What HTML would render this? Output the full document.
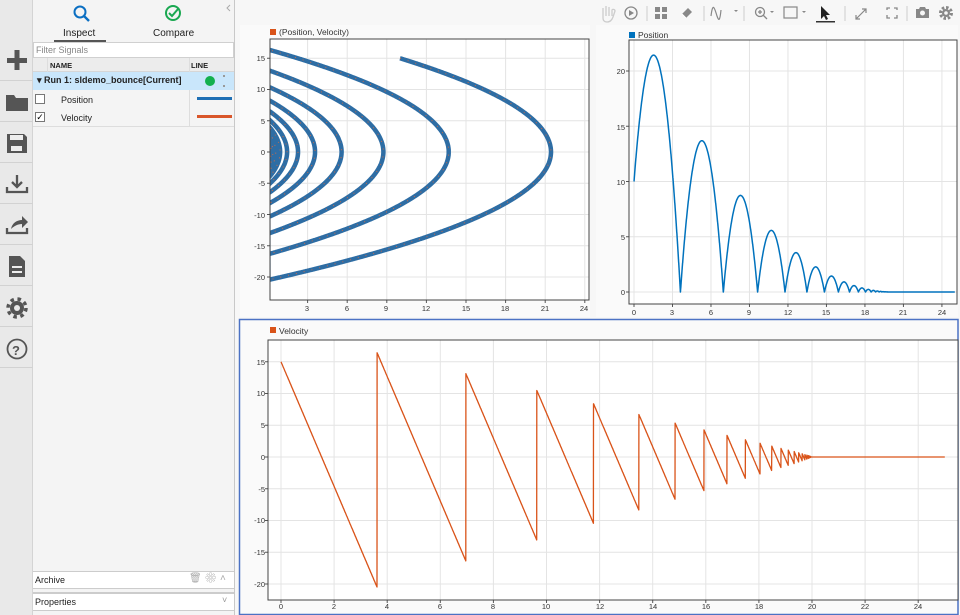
<!DOCTYPE html>
<html><head><meta charset="utf-8">
<style>
*{box-sizing:border-box;margin:0;padding:0}
body{width:960px;height:615px;overflow:hidden;background:#f7f7f7;font-family:"Liberation Sans",Arial,sans-serif;position:relative}
#bar{position:absolute;left:0;top:0;width:33px;height:615px;background:#e9e9e9;border-right:1px solid #d4d4d4}
.ic{position:absolute;left:0;width:33px;height:41px;border-bottom:1px solid #d2d2d2}
#panel{position:absolute;left:33px;top:0;width:202px;height:615px;background:#f4f4f4;border-right:1px solid #c8c8c8}
.a{position:absolute}
.t{position:absolute;font-size:9px;color:#222;white-space:nowrap}
.tick{font-size:7.5px;fill:#333;font-family:"Liberation Sans",Arial,sans-serif}
</style></head><body>
<div id="bar">
 <div class="ic" style="top:40px"></div>
 <div class="ic" style="top:81px"></div>
 <div class="ic" style="top:122px"></div>
 <div class="ic" style="top:163px"></div>
 <div class="ic" style="top:204px"></div>
 <div class="ic" style="top:245px"></div>
 <div class="ic" style="top:286px"></div>
 <div class="ic" style="top:327px"></div>
 <svg class="a" style="left:0;top:0" width="33" height="380" fill="#555" stroke="#555">
  <rect x="7" y="58" width="20" height="5" stroke="none"/><rect x="14.5" y="50" width="5" height="20" stroke="none"/>
  <path d="M6 95h8l2 3h12v13H6z" stroke="none"/>
  <path d="M7 134h17l3 3v16H7z" stroke="none"/><rect x="11" y="146" width="11" height="5" fill="#eee" stroke="none"/><rect x="10" y="135" width="13" height="5" fill="#eee" stroke="none"/>
  <path d="M17 175v12M12 182l5 5 5-5M7 187v5h20v-5" fill="none" stroke-width="2.3"/>
  <path d="M7 228v5h20v-5" fill="none" stroke-width="2.3"/><path d="M11 229c1-6 6-9 11-9v-4l6 6-6 6v-4c-4 0-8 2-11 5z" stroke="none"/>
  <path d="M9 256h11l5 5v16H9z" stroke="none"/><rect x="12" y="266" width="10" height="2" fill="#eee" stroke="none"/><rect x="12" y="271" width="10" height="2" fill="#eee" stroke="none"/>
  <circle cx="17" cy="308" r="7" stroke="none"/><circle cx="17" cy="308" r="9" fill="none" stroke-width="3.5" stroke-dasharray="3.5 3.6"/><circle cx="17" cy="308" r="3" fill="#e9e9e9" stroke="none"/>
  <circle cx="17" cy="349" r="9.5" fill="none" stroke-width="1.8"/>
 </svg>
 <div class="t" style="left:12px;top:343px;font-size:13px;font-weight:bold;color:#555">?</div>
</div>
<div id="panel">
 <svg class="a" style="left:0;top:0" width="202" height="42">
  <circle cx="47" cy="12" r="5.5" fill="none" stroke="#0b6fc2" stroke-width="2"/><path d="M51 16l5 5" stroke="#0b6fc2" stroke-width="2.4"/>
  <circle cx="140" cy="13" r="7" fill="none" stroke="#1aa851" stroke-width="2"/><path d="M136 13l3 3 6-7" fill="none" stroke="#1aa851" stroke-width="2"/>
  <path d="M197 5l-3 3 3 3" fill="none" stroke="#aaa"/>
  <rect x="21" y="40" width="52" height="2" fill="#555"/>
 </svg>
 <div class="t" style="left:30px;top:28px;font-size:10px">Inspect</div>
 <div class="t" style="left:120px;top:28px;font-size:10px">Compare</div>
 <div class="a" style="left:0;top:42px;width:201px;height:16px;background:#fff;border:1px solid #d0d0d0"></div>
 <div class="t" style="left:3px;top:45px;color:#888;font-size:9px">Filter Signals</div>
 <div class="a" style="left:0;top:58px;width:201px;height:14px;background:#ececec;border-bottom:1px solid #d6d6d6"></div>
 <div class="a" style="left:156px;top:58px;width:1px;height:68px;background:#ddd"></div>
 <div class="a" style="left:14px;top:58px;width:1px;height:14px;background:#ddd"></div>
 <div class="t" style="left:17px;top:61px;font-size:7.5px;font-weight:bold">NAME</div>
 <div class="t" style="left:158px;top:61px;font-size:7.5px;font-weight:bold">LINE</div>
 <div class="a" style="left:0;top:72px;width:201px;height:18px;background:#c9e6fb"></div>
 <div class="t" style="left:4px;top:75px;font-size:9px;font-weight:bold">▾ Run 1: sldemo_bounce[Current]</div>
 <div class="a" style="left:172px;top:76px;width:10px;height:10px;border-radius:50%;background:#13b04e"></div>
 <div class="a" style="left:190px;top:75px;width:2px;height:12px;border-top:2px dotted #999;border-bottom:2px dotted #999"></div>
 <div class="a" style="left:2px;top:94px;width:10px;height:10px;background:#fff;border:1px solid #777"></div>
 <div class="a" style="left:2px;top:112px;width:10px;height:10px;background:#fff;border:1px solid #777;font-size:9px;line-height:8px;text-align:center">✓</div>
 <div class="t" style="left:28px;top:95px">Position</div>
 <div class="t" style="left:28px;top:113px">Velocity</div>
 <div class="a" style="left:164px;top:97px;width:35px;height:3px;background:#1f6fb4"></div>
 <div class="a" style="left:164px;top:115px;width:35px;height:3px;background:#d9562a"></div>
 <div class="a" style="left:0;top:126px;width:201px;height:1px;background:#ddd"></div>
 <div class="a" style="left:0;top:571px;width:201px;height:18px;background:#fff;border-top:1px solid #ccc;border-bottom:1px solid #ccc"></div>
 <div class="t" style="left:2px;top:575px">Archive</div>
 <div class="t" style="left:156px;top:573px;color:#aaa;font-size:10px">🗑 ⚙ ˄</div>
 <div class="a" style="left:0;top:592px;width:201px;height:19px;background:#fff;border-top:2px solid #ccc;border-bottom:1px solid #ccc"></div>
 <div class="t" style="left:2px;top:597px">Properties</div>
 <div class="t" style="left:189px;top:595px;color:#999;font-size:9px">˅</div>
</div>

<svg class="a" style="left:0;top:0" width="960" height="615" id="plots">
 <g fill="#888" stroke="#888">
  <path d="M603 16v-8m3 8v-10m3 10v-9m3 9v-6c0-1 3-1 3 1l-2 6c-1 3-3 5-6 5s-4-2-4-4v-4" fill="none" stroke="#ccc" stroke-width="1.3"/>
  <circle cx="631" cy="13" r="6" fill="none" stroke-width="1.3"/><path d="M629 10l5 3-5 3z" stroke="none"/>
  <line x1="647" y1="6" x2="647" y2="21" stroke="#ccc"/>
  <rect x="655" y="7" width="5" height="5" stroke="none"/><rect x="662" y="7" width="5" height="5" stroke="none"/><rect x="655" y="14" width="5" height="5" stroke="none"/><rect x="662" y="14" width="5" height="5" stroke="none"/>
  <path d="M682 14l6-6 4 4-6 6z" stroke="none"/><path d="M682 14l4 4" stroke="#fff"/>
  <line x1="704" y1="6" x2="704" y2="21" stroke="#ccc"/>
  <path d="M711 16c2-16 4-6 6 0s3 4 4-6" fill="none" stroke-width="1.2"/><path d="M734 10l2 2 2-2z" stroke="none"/>
  <line x1="744" y1="6" x2="744" y2="21" stroke="#ccc"/>
  <circle cx="760" cy="12" r="4.5" fill="none" stroke-width="1.3"/><path d="M763 15l4 4M758 12h4M760 10v4" stroke-width="1.3"/><path d="M770 11l2 2 2-2z" stroke="none"/>
  <rect x="784" y="7" width="13" height="11" fill="none" stroke-width="1.2"/><path d="M802 11l2 2 2-2z" stroke="none"/>
  <path d="M821 6l9 9h-4l2 4-2 1-2-4-3 3z" fill="#222" stroke="none"/><rect x="816" y="21" width="19" height="1.5" fill="#333" stroke="none"/>
  <line x1="845" y1="6" x2="845" y2="21" stroke="#ccc"/>
  <path d="M856 19l10-10M856 15v4h4M866 13V9h-4" fill="none" stroke-width="1.2"/>
  <path d="M887 10V8h3M894 8h3v2M897 15v3h-3M890 18h-3v-3" fill="none" stroke-width="1.3"/>
  <line x1="907" y1="6" x2="907" y2="21" stroke="#ccc"/>
  <path d="M916 9h3l1-2h5l1 2h3v9h-13z" stroke="none"/><circle cx="922.5" cy="13" r="2.5" fill="#f7f7f7" stroke="none"/>
  <circle cx="946" cy="13" r="4" stroke="none"/><circle cx="946" cy="13" r="5.5" fill="none" stroke-width="3" stroke-dasharray="2.5 1.8"/><circle cx="946" cy="13" r="1.8" fill="#f7f7f7" stroke="none"/>
 </g>
 <rect x="240" y="25" width="350" height="292" fill="#fafafa"/>
 <rect x="596" y="25" width="362" height="292" fill="#fafafa"/>
 <rect x="239.5" y="319.5" width="718.5" height="295" fill="#fafafa" stroke="#4c72c4" stroke-width="1.5"/>
 <rect x="270" y="29" width="6" height="6" fill="#d95319"/><text x="279" y="35" class="tick" style="font-size:8.5px">(Position, Velocity)</text>
 <rect x="629" y="32" width="6" height="6" fill="#0072bd"/><text x="638" y="38" class="tick" style="font-size:8.5px">Position</text>
 <rect x="270" y="327" width="6" height="6" fill="#d95319"/><text x="279" y="334" class="tick" style="font-size:8.5px">Velocity</text>
 <g id="g1"></g><g id="g2"></g><g id="g3"></g>
 <g class="tick" text-anchor="middle">
  <text x="307" y="311">3</text><text x="347" y="311">6</text><text x="386" y="311">9</text><text x="426" y="311">12</text><text x="466" y="311">15</text><text x="505" y="311">18</text><text x="545" y="311">21</text><text x="584" y="311">24</text>
  <text x="634" y="315">0</text><text x="672" y="315">3</text><text x="711" y="315">6</text><text x="749" y="315">9</text><text x="788" y="315">12</text><text x="826" y="315">15</text><text x="865" y="315">18</text><text x="903" y="315">21</text><text x="942" y="315">24</text>
  <text x="281" y="609">0</text><text x="334" y="609">2</text><text x="387" y="609">4</text><text x="440" y="609">6</text><text x="493" y="609">8</text><text x="546" y="609">10</text><text x="600" y="609">12</text><text x="653" y="609">14</text><text x="706" y="609">16</text><text x="759" y="609">18</text><text x="812" y="609">20</text><text x="865" y="609">22</text><text x="918" y="609">24</text>
 </g>
 <g class="tick" text-anchor="end">
  <text x="265" y="61">15</text><text x="265" y="92">10</text><text x="265" y="124">5</text><text x="265" y="155">0</text><text x="265" y="186">-5</text><text x="265" y="218">-10</text><text x="265" y="249">-15</text><text x="265" y="280">-20</text>
  <text x="625" y="74">20</text><text x="625" y="130">15</text><text x="625" y="185">10</text><text x="625" y="240">5</text><text x="625" y="295">0</text>
  <text x="265" y="365">15</text><text x="265" y="396">10</text><text x="265" y="428">5</text><text x="265" y="460">0</text><text x="265" y="492">-5</text><text x="265" y="523">-10</text><text x="265" y="555">-15</text><text x="265" y="587">-20</text>
 </g>
</svg>
<script>
var g=9.81,h=10,v=15,t=0,dt=0.004,P=[];
while(t<25){P.push([t,h,v]);v-=g*dt;h+=v*dt;if(h<0){h=0;v=-0.8*v;if(Math.abs(v)<0.05)v=0;P.push([t+dt,0,v]);}if(h<=0&&v<=0.001){h=0;v=0;}t+=dt;}
function ax(id,x0,y0,w,hh,xs,x0v,ys,y0v,xt,yt,pts,col,sw,extra){
 var s='<rect x="'+x0+'" y="'+y0+'" width="'+w+'" height="'+hh+'" fill="#fff"/>';
 xt.forEach(function(a){var X=x0v+a*xs;s+='<line x1="'+X+'" y1="'+y0+'" x2="'+X+'" y2="'+(y0+hh)+'" stroke="#e4e4e4"/><line x1="'+X+'" y1="'+(y0+hh)+'" x2="'+X+'" y2="'+(y0+hh+3)+'" stroke="#555"/>';});
 yt.forEach(function(a){var Y=y0v-a*ys;s+='<line x1="'+x0+'" y1="'+Y+'" x2="'+(x0+w)+'" y2="'+Y+'" stroke="#e4e4e4"/><line x1="'+(x0-3)+'" y1="'+Y+'" x2="'+x0+'" y2="'+Y+'" stroke="#555"/>';});
 var d='';pts.forEach(function(p,i){d+=(i?'L':'M')+p[0].toFixed(1)+' '+p[1].toFixed(1);});
 s+='<clipPath id="c'+id+'"><rect x="'+x0+'" y="'+y0+'" width="'+w+'" height="'+hh+'"/></clipPath><g clip-path="url(#c'+id+')"><path d="'+d+'" fill="none" stroke="'+col+'" stroke-width="'+sw+'" stroke-linejoin="round"/>'+(extra?'<path d="'+d+'" fill="none" stroke="#c96b4a" stroke-width="1" stroke-dasharray="1 7" />':'')+'</g>';
 s+='<rect x="'+x0+'" y="'+y0+'" width="'+w+'" height="'+hh+'" fill="none" stroke="#444"/>';
 document.getElementById(id).innerHTML=s;
}
var p1=[],p2=[],p3=[];
P.forEach(function(p){p1.push([268+p[1]*13.2,152-p[2]*6.25]);p2.push([634+p[0]*12.83,292-p[1]*11.05]);p3.push([281+p[0]*26.55,457-p[2]*6.35]);});
var n=[];for(var i=0;i<=24;i+=3)n.push(i);
var n2=[];for(var i=0;i<=24;i+=2)n2.push(i);
ax('g1',270,39,319,261,13.2,268,6.25,152,n.slice(1),[15,10,5,0,-5,-10,-15,-20],p1,'#2e6da4',4.5,true);
ax('g2',629,40,328,264,12.83,634,11.05,292,n,[0,5,10,15,20],p2,'#0072bd',1.5,false);
ax('g3',268,340,690,260,26.55,281,6.35,457,n2,[15,10,5,0,-5,-10,-15,-20],p3,'#d95319',1.3,false);
</script>
</body></html>
